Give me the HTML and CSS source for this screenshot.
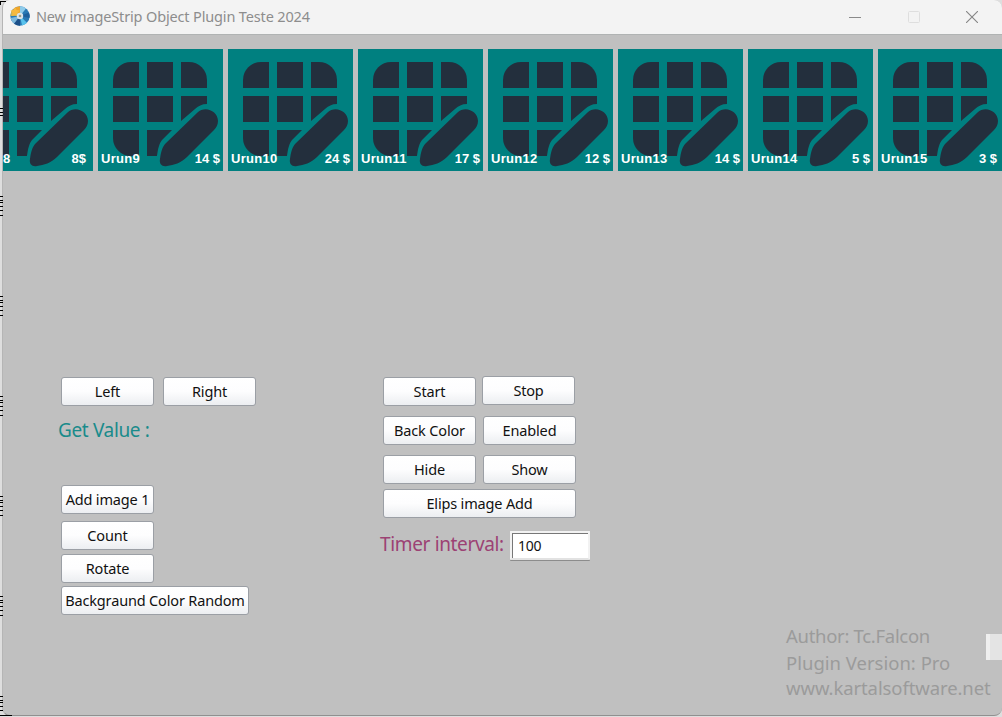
FILE: index.html
```html
<!DOCTYPE html>
<html lang="en">
<head>
  <meta charset="UTF-8">
  <title>New imageStrip Object Plugin Teste 2024</title>
  <link rel="stylesheet" href="styles.css">
</head>
<body>

<svg class="ruler" id="ruler" width="12" height="717"></svg>

<div class="window">
  <header class="titlebar">
    <svg class="app-icon" width="20" height="20" viewBox="0 0 20 20">
      <circle cx="10" cy="10" r="9.7" fill="#2878b4"/>
      <path d="M10 10L.3 10A9.7 9.7 0 0 1 3 3.3z" fill="#c9b458"/>
      <path d="M10 10L3 3.3A9.7 9.7 0 0 1 10 .3z" fill="#efa52b"/>
      <path d="M10 10L10 .3A9.7 9.7 0 0 1 16 2.6z" fill="#8ecbea"/>
      <path d="M10 10L19 6.5A9.7 9.7 0 0 1 19.5 12z" fill="#1d5f9c"/>
      <path d="M10 10L17 16.7A9.700 9.700 0 0 1 12 19.5z" fill="#59c2ec"/>
      <path d="M10 10L5 18.300A9.700 9.700 0 0 1 .5 12z" fill="#7fb9dc"/>
      <path d="M10 10L10 19.700A9.700 9.700 0 0 1 4 17.700z" fill="#1c4f88"/>
      <path d="M5 1.200l1.600 2.800 3.200.6-2.200 2.300.4 3.200L5 8.700 2 10.100l.4-3.200L.6 4.600l2.900-.6z" fill="#f7b93d"/>
      <circle cx="10" cy="10" r="3.200" fill="#d9e4ea"/>
      <circle cx="10" cy="10" r="1.300" fill="#9b9a84"/>
    </svg>
    <span class="title">New imageStrip Object Plugin Teste 2024</span>
    <div class="win-buttons">
      <svg width="12" height="12" viewBox="0 0 12 12"><path d="M0 6.500h12" stroke="#8a8a8a"/></svg>
      <svg width="12" height="12" viewBox="0 0 12 12"><rect x=".5" y=".5" width="11" height="11" rx="1" fill="none" stroke="#dedede"/></svg>
      <svg width="12" height="12" viewBox="0 0 12 12"><path d="M0 0l12 12M12 0L0 12" stroke="#858585" stroke-width="1.100"/></svg>
    </div>
  </header>

  <svg width="0" height="0" class="defs">
    <symbol id="gridPen" viewBox="0 0 125 122">
      <g fill="#232f3d">
        <path d="M42 13v26H16v-8a18 18 0 0 1 18-18z"/>
        <path d="M50 13h26v26H50z"/>
        <path d="M84 13h8a18 18 0 0 1 18 18v8H84z"/>
        <path d="M16 47h26v26H16z"/>
        <path d="M50 47h26v26H50z"/>
        <path d="M84 47h26v8c-5 0-9 2-12 5L84 72z"/>
        <path d="M16 81h26v26h-8a18 18 0 0 1-18-18z"/>
        <path d="M50 81h25L66 90c-4 4-5 10-6 17H50z"/>
        <path d="M100.500 63.500C108 56 121 62 121 72c0 4-2 7-4 9L90 108c-6 6-13 8-20 9-5 1-8-2-7-7 1-7 2-12 6-16z"/>
      </g>
    </symbol>
  </svg>

  <div class="strip">
    <div class="tile"><svg><use href="#gridPen"/></svg><span class="scrolled">8</span><span class="price first">8$</span></div>
    <div class="tile"><svg><use href="#gridPen"/></svg><span>Urun9</span><span class="price">14 $</span></div>
    <div class="tile"><svg><use href="#gridPen"/></svg><span>Urun10</span><span class="price">24 $</span></div>
    <div class="tile"><svg><use href="#gridPen"/></svg><span>Urun11</span><span class="price">17 $</span></div>
    <div class="tile"><svg><use href="#gridPen"/></svg><span>Urun12</span><span class="price">12 $</span></div>
    <div class="tile"><svg><use href="#gridPen"/></svg><span>Urun13</span><span class="price">14 $</span></div>
    <div class="tile"><svg><use href="#gridPen"/></svg><span>Urun14</span><span class="price">5 $</span></div>
    <div class="tile"><svg><use href="#gridPen"/></svg><span>Urun15</span><span class="price last">3 $</span></div>
  </div>

  <main class="panel">
    <section class="left-col">
      <div class="row">
        <button>Left</button>
        <button>Right</button>
      </div>
      <div class="get-value">Get Value :</div>
      <button class="add">Add image 1</button>
      <button class="count">Count</button>
      <button class="rotate">Rotate</button>
      <button class="random">Backgraund Color Random</button>
    </section>

    <section class="right-col">
      <div class="row start-row">
        <button>Start</button>
        <button class="stop">Stop</button>
      </div>
      <div class="row">
        <button class="back-color">Back Color</button>
        <button>Enabled</button>
      </div>
      <div class="row">
        <button>Hide</button>
        <button>Show</button>
      </div>
      <button class="elips">Elips image Add</button>
      <div class="timer">
        <label for="interval">Timer interval:</label>
        <input type="text" id="interval" value="100">
      </div>
    </section>
  </main>

  <footer class="about">
    <div class="author">Author: Tc.Falcon</div>
    <div class="version">Plugin Version: Pro</div>
    <div class="site">www.kartalsoftware.net</div>
  </footer>
</div>

<div class="side-tab"></div>

<script>
  // ruler marks that show beside the window, one group every 100px
  const ruler = document.getElementById("ruler");
  let marks = "";
  [108, 112, 115].forEach(y => {
    marks += `<rect x="0" y="${y}" width="3" height="1"/>`;
  });
  for (let y = 196; y < 717; y += 100) {
    [0, 4, 6, 10, 14, 19].forEach(d => {
      marks += `<rect x="0" y="${y + d}" width="3" height="1"/>`;
    });
  }
  ruler.innerHTML = marks + '<rect x="0" y="1" width="6" height="1"/><rect x="0" y="1" width="1" height="4"/><rect x="0" y="715" width="12" height="1"/>';
</script>

</body>
</html>
```
FILE: styles.css
```css
* {
  box-sizing: border-box;
}

body {
  margin: 0;
  width: 1002px;
  height: 717px;
  overflow: hidden;
  position: relative;
  background: #dedede;
  font-family: 'Noto Sans', sans-serif;
}

.ruler {
  position: absolute;
  top: 0;
  left: 0;
  z-index: 1;
}

.window {
  position: relative;
  display: flex;
  flex-direction: column;
  width: 1000px;
  height: 716px;
  margin-left: 2px;
  background: #c0c0c0;
  border-left: 1px solid #b5b5b5;
  border-bottom: 1px solid #909090;
  border-radius: 8px;
  overflow: hidden;
}

.titlebar {
  display: flex;
  align-items: center;
  flex: none;
  height: 35px;
  padding: 0 24px 2px 7px;
  background: #f3f3f3;
  border-bottom: 1px solid #b0b3b3;
}

.app-icon {
  margin-right: 6px;
}

.title {
  font-size: 14.5px;
  letter-spacing: -0.15px;
  color: #8d8d8d;
  white-space: nowrap;
}

.win-buttons {
  display: flex;
  gap: 46.5px;
  margin-left: auto;
  padding-top: 1px;
}

.defs {
  position: absolute;
}

.strip {
  display: flex;
  flex: none;
  gap: 5px;
  margin: 14px 0 0 -35px;
  height: 122px;
}

.tile {
  position: relative;
  display: flex;
  justify-content: space-between;
  align-items: flex-end;
  flex: none;
  width: 125px;
  height: 122px;
  padding: 0 3px 3px;
  background: #008080;
  color: #fff;
  font: bold 13px/18px 'Liberation Sans', sans-serif;
  letter-spacing: 0.3px;
}

.tile svg {
  position: absolute;
  top: 0;
  left: -1px;
  width: 125px;
  height: 122px;
}

.tile span {
  position: relative;
}

.tile .price {
  letter-spacing: 0;
}

.tile .scrolled {
  margin-left: 32px;
}

.tile .first {
  margin-right: 4px;
}

.tile .last {
  margin-right: 3px;
}

.panel {
  display: flex;
  padding: 206px 0 0 58px;
}

.left-col {
  display: flex;
  flex-direction: column;
  align-items: flex-start;
  width: 322px;
}

.row {
  display: flex;
  gap: 9px;
}

button {
  width: 93px;
  height: 29px;
  padding: 0 0 1px;
  border: 1px solid #9b9fa5;
  border-radius: 3px;
  background: linear-gradient(#fff, #fdfdfe 50%, #eceef1);
  color: #111;
  font-family: 'Noto Sans', sans-serif;
  font-size: 14.5px;
  letter-spacing: -0.16px;
  white-space: nowrap;
}

.get-value {
  height: 26px;
  margin: 11px 0 42px -3px;
  font-size: 19px;
  letter-spacing: -0.35px;
  line-height: 26px;
  color: #198b8b;
}

.count {
  margin-top: 7px;
}

.rotate {
  margin-top: 4px;
}

.random {
  width: 188px;
  margin-top: 3px;
}

.right-col .row {
  gap: 7px;
  margin-bottom: 10px;
}

.right-col .start-row {
  gap: 6px;
}

.stop {
  margin-top: -1px;
}

.right-col .elips {
  display: block;
  width: 193px;
  margin-top: -5px;
}

.timer {
  display: flex;
  align-items: center;
  margin: 13px 0 0 -3px;
  font-size: 19px;
  letter-spacing: -0.35px;
  line-height: 26px;
  color: #9c4274;
}

.timer label {
  width: 130px;
  margin-top: -3px;
  white-space: nowrap;
}

.timer input {
  width: 80px;
  height: 29px;
  padding: 0 6px;
  border: 2px solid #f2f2f2;
  border-bottom-color: #e2e2e2;
  border-radius: 1px;
  background: #fff;
  box-shadow: inset 1px 1px 0 #777, 0 1px 0 #8c8c8c;
  color: #111;
  font-family: 'Noto Sans', sans-serif;
  font-size: 14px;
  letter-spacing: -0.3px;
}

.about {
  margin: auto 0 15px 783px;
  color: #9b9b9b;
  font-size: 18.5px;
  line-height: 27px;
  white-space: nowrap;
}

.author {
  letter-spacing: -0.3px;
}

.site {
  letter-spacing: -0.1px;
  line-height: 24px;
}

.side-tab {
  position: absolute;
  left: 986px;
  top: 634px;
  width: 16px;
  height: 26px;
  background: #e4e4e4;
  border-left: 4px solid #efefef;
}
```
